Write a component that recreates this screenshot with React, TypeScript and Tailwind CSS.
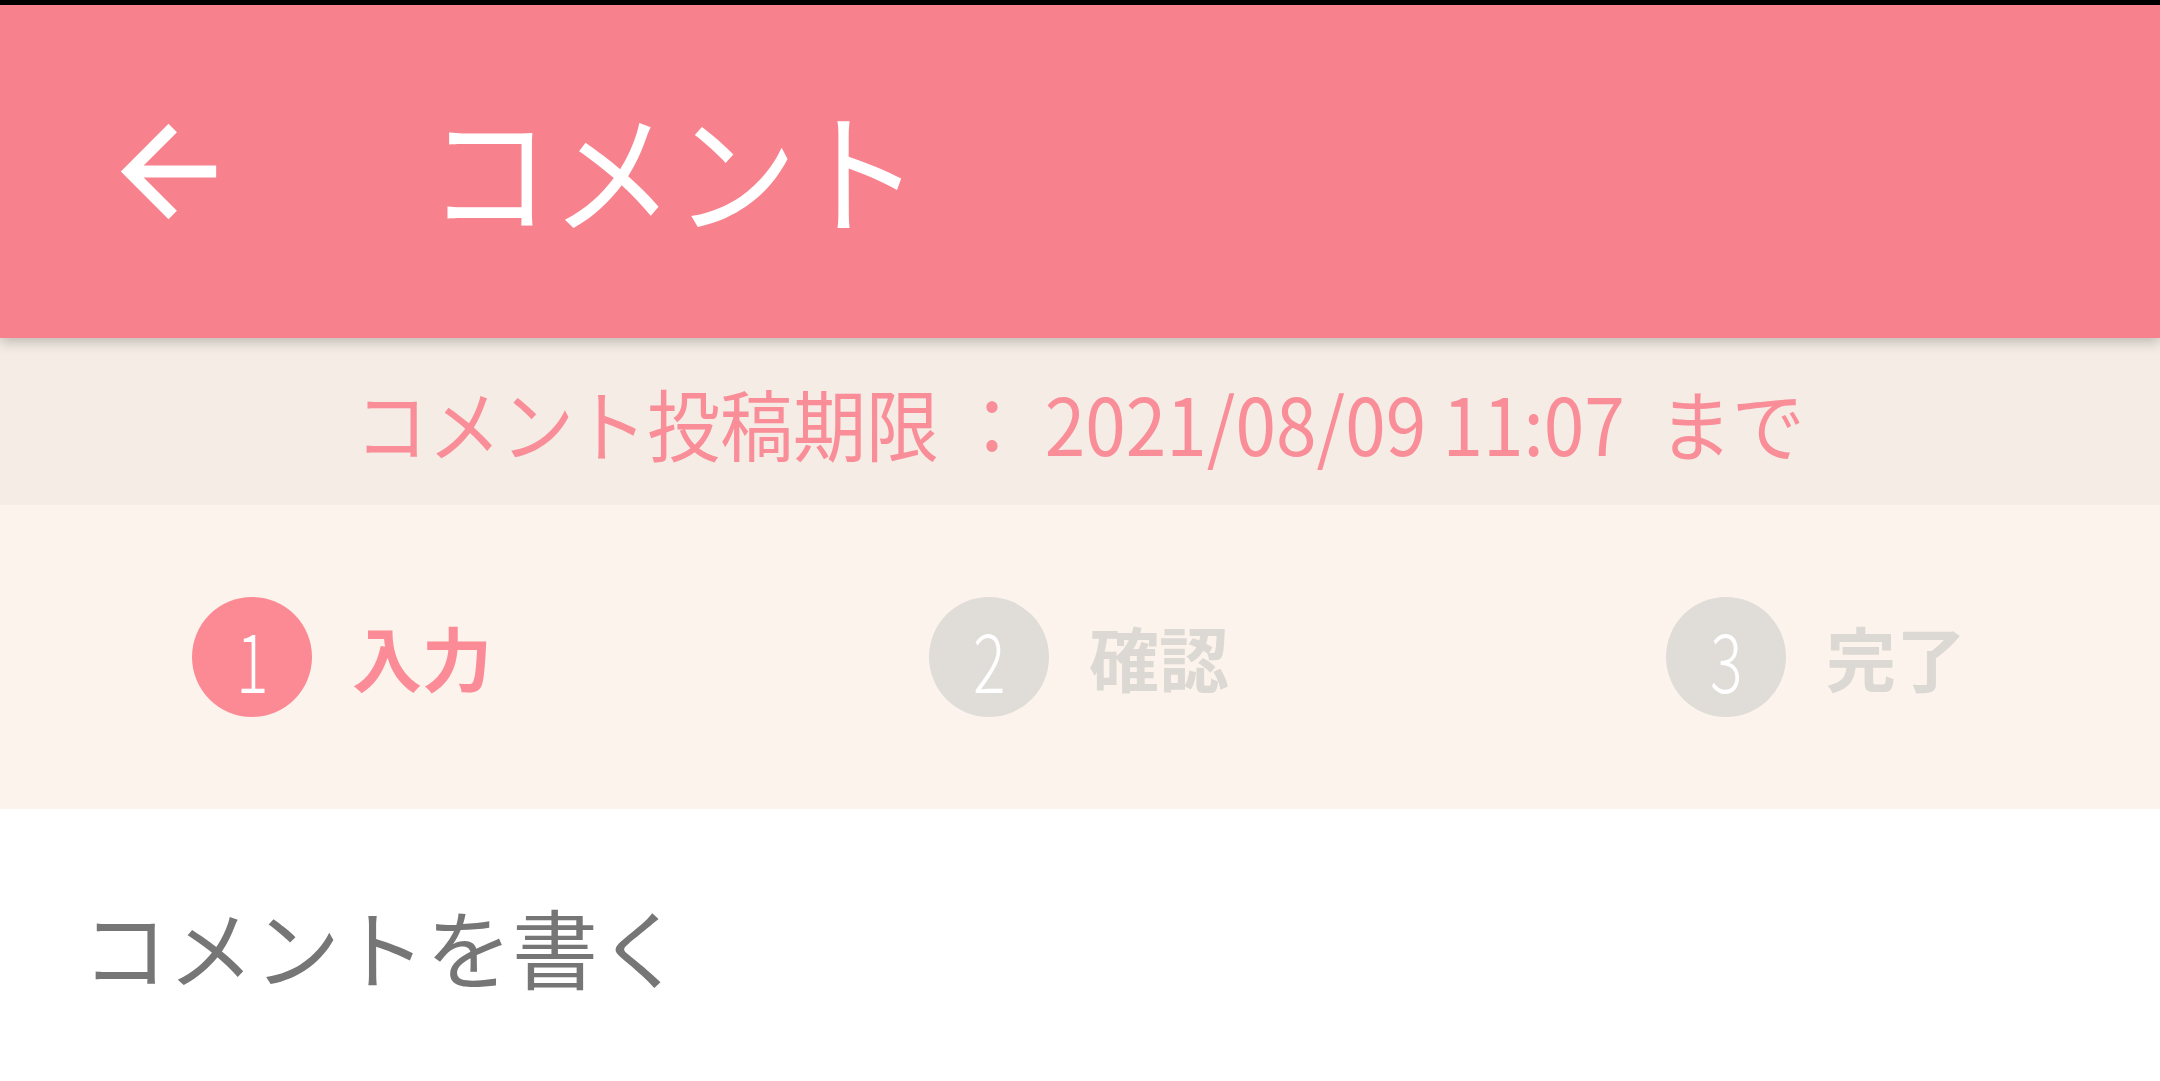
// Comment entry screen — step 1 of 3 (入力 / 確認 / 完了).

const font = "font-['Noto_Sans_CJK_JP','Noto_Sans',sans-serif]";

type Step = { num: number; label: string; active: boolean };

const steps: Step[] = [
  { num: 1, label: "入力", active: true },
  { num: 2, label: "確認", active: false },
  { num: 3, label: "完了", active: false },
];

function BackArrow() {
  return (
    <svg viewBox="0 0 24 24" className="h-[143px] w-[143px] fill-white">
      <path d="M20 11H7.83l5.59-5.59L12 4l-8 8 8 8 1.41-1.41L7.83 13H20v-2z" />
    </svg>
  );
}

function StepItem({ step }: { step: Step }) {
  return (
    <div className="flex items-center gap-[40px]">
      <div
        className={`flex h-[120px] w-[120px] items-center justify-center rounded-full text-[76px] font-light leading-none text-white ${
          step.active ? "bg-[#fc8a95]" : "bg-[#e0dcd8]"
        }`}
      >
        <span className="scale-x-[0.8] scale-y-[1.08]">{step.num}</span>
      </div>
      <span
        className={`text-[70px] font-bold leading-none ${
          step.active ? "text-[#fb8b96]" : "text-[#dcd8d3]"
        }`}
      >
        {step.label}
      </span>
    </div>
  );
}

export default function App() {
  return (
    <div className={`min-h-[1081px] w-full bg-white ${font}`}>
      <div className="h-[5px] bg-black" />
      <header className="relative z-10 flex h-[333px] items-center bg-[#f7818c] shadow-[0_4px_12px_rgba(0,0,0,0.22)]">
        <div className="ml-[97px]">
          <BackArrow />
        </div>
        <h1 className="mb-[10px] ml-[188px] origin-center scale-y-[1.08] text-[123px] font-normal leading-none text-white">
          コメント
        </h1>
      </header>
      <div className="flex h-[167px] items-center justify-center bg-[#f4ece5] text-[73px] leading-none text-[#f98d98]">
        <span className="scale-y-[1.08]">
          コメント投稿期限 ： 2021/08/09 11:07<span className="ml-[34px]">まで</span>
        </span>
      </div>
      <div className="flex h-[304px] items-center justify-between bg-[#fcf4ec] pl-[192px] pr-[194px]">
        {steps.map((s) => (
          <StepItem key={s.num} step={s} />
        ))}
      </div>
      <div className="pl-[82px] pt-[72px] text-[86px] leading-[1.5] text-[#767676]">コメントを書く</div>
    </div>
  );
}
